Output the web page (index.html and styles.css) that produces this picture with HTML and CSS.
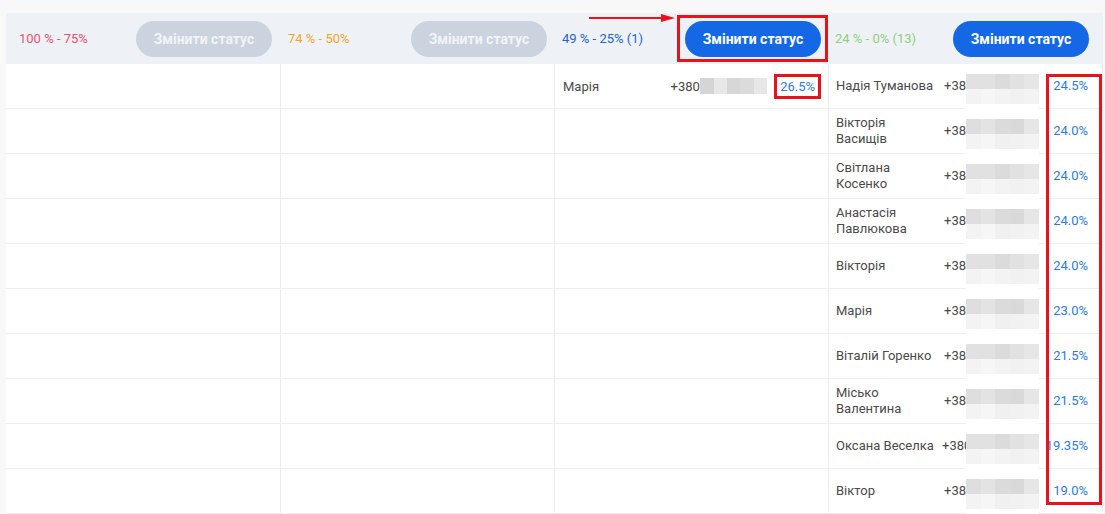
FILE: index.html
```html
<!DOCTYPE html>
<html lang="uk">
<head>
<meta charset="UTF-8">
<meta name="viewport" content="width=device-width, initial-scale=1.0">
<title>Статуси</title>
<link rel="stylesheet" href="styles.css">
</head>
<body>

<div class="board">
    <div class="head">
        <div class="head-cell">
            <span class="range red">100 % - 75%</span>
            <button class="status-btn off">Змінити статус</button>
        </div>
        <div class="head-cell">
            <span class="range orange">74 % - 50%</span>
            <button class="status-btn off">Змінити статус</button>
        </div>
        <div class="head-cell">
            <span class="range blue">49 % - 25% (1)</span>
            <button class="status-btn">Змінити статус</button>
        </div>
        <div class="head-cell last">
            <span class="range green">24 % - 0% (13)</span>
            <button class="status-btn">Змінити статус</button>
        </div>
    </div>

    <div class="grid">
        <!-- рядок 1 -->
        <div class="cell"></div>
        <div class="cell"></div>
        <div class="cell mid">
            <span class="name">Марія</span>
            <span class="phone">+380</span>
            <span class="blur-line"><i></i><i></i><i></i><i></i><i></i></span>
            <span class="pct marked">26.5%</span>
        </div>
        <div class="cell person">
            <span class="name">Надія Туманова</span>
            <span class="phone">+38</span>
            <span class="blur"><i></i><i></i><i></i><i></i><i></i><i></i><i></i><i></i><i></i><i></i></span>
            <span class="pct">24.5%</span>
        </div>
        <!-- рядок 2 -->
        <div class="cell"></div>
        <div class="cell"></div>
        <div class="cell"></div>
        <div class="cell person">
            <span class="name">Вікторія Васищів</span>
            <span class="phone">+38</span>
            <span class="blur alt"><i></i><i></i><i></i><i></i><i></i><i></i><i></i><i></i><i></i><i></i></span>
            <span class="pct">24.0%</span>
        </div>
        <!-- рядок 3 -->
        <div class="cell"></div>
        <div class="cell"></div>
        <div class="cell"></div>
        <div class="cell person">
            <span class="name">Світлана Косенко</span>
            <span class="phone">+38</span>
            <span class="blur"><i></i><i></i><i></i><i></i><i></i><i></i><i></i><i></i><i></i><i></i></span>
            <span class="pct">24.0%</span>
        </div>
        <!-- рядок 4 -->
        <div class="cell"></div>
        <div class="cell"></div>
        <div class="cell"></div>
        <div class="cell person">
            <span class="name">Анастасія Павлюкова</span>
            <span class="phone">+38</span>
            <span class="blur alt"><i></i><i></i><i></i><i></i><i></i><i></i><i></i><i></i><i></i><i></i></span>
            <span class="pct">24.0%</span>
        </div>
        <!-- рядок 5 -->
        <div class="cell"></div>
        <div class="cell"></div>
        <div class="cell"></div>
        <div class="cell person">
            <span class="name">Вікторія</span>
            <span class="phone">+38</span>
            <span class="blur"><i></i><i></i><i></i><i></i><i></i><i></i><i></i><i></i><i></i><i></i></span>
            <span class="pct">24.0%</span>
        </div>
        <!-- рядок 6 -->
        <div class="cell"></div>
        <div class="cell"></div>
        <div class="cell"></div>
        <div class="cell person">
            <span class="name">Марія</span>
            <span class="phone">+38</span>
            <span class="blur alt"><i></i><i></i><i></i><i></i><i></i><i></i><i></i><i></i><i></i><i></i></span>
            <span class="pct">23.0%</span>
        </div>
        <!-- рядок 7 -->
        <div class="cell"></div>
        <div class="cell"></div>
        <div class="cell"></div>
        <div class="cell person">
            <span class="name">Віталій Горенко</span>
            <span class="phone">+38</span>
            <span class="blur"><i></i><i></i><i></i><i></i><i></i><i></i><i></i><i></i><i></i><i></i></span>
            <span class="pct">21.5%</span>
        </div>
        <!-- рядок 8 -->
        <div class="cell"></div>
        <div class="cell"></div>
        <div class="cell"></div>
        <div class="cell person">
            <span class="name">Місько Валентина</span>
            <span class="phone">+38</span>
            <span class="blur alt"><i></i><i></i><i></i><i></i><i></i><i></i><i></i><i></i><i></i><i></i></span>
            <span class="pct">21.5%</span>
        </div>
        <!-- рядок 9 -->
        <div class="cell"></div>
        <div class="cell"></div>
        <div class="cell"></div>
        <div class="cell person">
            <span class="name">Оксана Веселка</span>
            <span class="phone">+380</span>
            <span class="blur"><i></i><i></i><i></i><i></i><i></i><i></i><i></i><i></i><i></i><i></i></span>
            <span class="pct">19.35%</span>
        </div>
        <!-- рядок 10 -->
        <div class="cell"></div>
        <div class="cell"></div>
        <div class="cell"></div>
        <div class="cell person">
            <span class="name">Віктор</span>
            <span class="phone">+38</span>
            <span class="blur alt"><i></i><i></i><i></i><i></i><i></i><i></i><i></i><i></i><i></i><i></i></span>
            <span class="pct">19.0%</span>
        </div>
    </div>

    <!-- позначки на скріншоті -->
    <svg class="note-arrow" width="86" height="10" viewBox="0 0 86 10">
        <line x1="0" y1="5" x2="74" y2="5" stroke="#e8121c" stroke-width="2"/>
        <polygon points="72,1 86,5 72,9" fill="#e8121c"/>
    </svg>
    <div class="note-box btn-box"></div>
    <div class="note-box pct-box"></div>
</div>

</body>
</html>
```

FILE: styles.css
```css
body {
    margin: 0;
    padding: 0;
    background-color: #f8f8f9;
    font-family: Roboto, "Noto Sans", Arial, sans-serif;
    font-size: 13px;
    color: #4a4a4a;
}
.board {
    position: relative;
    width: 1097px;
    margin: 13px 0 0 6px;
    background-color: #ffffff;
}
.head {
    display: grid;
    grid-template-columns: 275px 274px 274px 274px;
    height: 51px;
    background-color: #eef2f6;
}
.head-cell {
    display: flex;
    align-items: center;
    justify-content: space-between;
    padding: 0 8px 0 7px;
}
.head-cell:first-child {
    padding-left: 13px;
    padding-right: 9px;
}
.head-cell.last {
    padding-left: 6px;
    padding-right: 14px;
}
.range {
    font-size: 13px;
}
.red { color: #f1506b; }
.orange { color: #f8a523; }
.blue { color: #2263d8; }
.green { color: #8fcf7e; }

.status-btn {
    width: 136px;
    height: 36px;
    border: none;
    border-radius: 18px;
    background-color: #1468e6;
    color: #ffffff;
    font-family: Roboto, "Noto Sans", Arial, sans-serif;
    font-size: 14px;
    font-weight: bold;
    cursor: pointer;
}
.status-btn.off {
    background-color: #cbd3df;
    color: #f1f4f8;
}

.grid {
    display: grid;
    grid-template-columns: 275px 274px 274px 274px;
    grid-auto-rows: 45px;
}
.cell {
    border-right: 1px solid #e9edf3;
    border-bottom: 1px solid #eef0f3;
    box-sizing: border-box;
}
.cell.mid {
    display: flex;
    align-items: center;
    padding: 0 7px 0 8px;
}
.cell.mid .name {
    width: 108px;
}
.cell.mid .phone {
    width: 30px;
}
.blur-line {
    display: flex;
    width: 67px;
    height: 16px;
    margin-right: 7px;
}
.blur-line i {
    flex: 1;
    background-color: #d5d5d5;
}
.blur-line i:nth-child(2) { background-color: #e8e8e8; }
.blur-line i:nth-child(3) { background-color: #d7d7d7; }
.blur-line i:nth-child(4) { background-color: #dbdbdb; }
.blur-line i:nth-child(5) { background-color: #e7e7e7; }

.pct {
    color: #2b7be6;
    margin-left: auto;
}
.pct.marked {
    border: 3px solid #e8121c;
    padding: 2px 3px;
}

.cell.person {
    display: flex;
    align-items: center;
    padding: 0 14px 0 7px;
    line-height: 16px;
}
.person .name {
    width: 99px;
    flex-shrink: 0;
}
.person .phone {
    flex: 1;
    min-width: 0;
    padding-left: 7px;
    text-align: right;
    white-space: nowrap;
}
.person .pct {
    width: 49px;
    flex-shrink: 0;
    text-align: right;
}

/* закрите поле телефону */
.blur {
    align-self: flex-start;
    flex-shrink: 0;
    display: grid;
    grid-template-columns: repeat(5, 1fr);
    grid-template-rows: 15px 15px;
    width: 73px;
    height: 45px;
    padding-top: 10px;
    box-sizing: border-box;
    background-color: #ffffff;
    position: relative;
}
.blur i { background-color: #e1e1e1; }
.blur i:nth-child(3) { background-color: #dbdbdb; }
.blur i:nth-child(5) { background-color: #e6e6e6; }
.blur i:nth-child(n+6) { background-color: #f3f3f3; }
.blur i:nth-child(7) { background-color: #f6f6f6; }
.blur i:nth-child(9) { background-color: #f1f1f1; }
.blur.alt i:nth-child(1) { background-color: #dedede; }
.blur.alt i:nth-child(2) { background-color: #e3e3e3; }
.blur.alt i:nth-child(4) { background-color: #d9d9d9; }
.blur.alt i:nth-child(8) { background-color: #f0f0f0; }

.note-arrow {
    position: absolute;
    left: 583px;
    top: 0;
}
.note-box {
    position: absolute;
    border: 3px solid #e8121c;
    box-sizing: border-box;
}
.btn-box {
    left: 671px;
    top: 2px;
    width: 151px;
    height: 47px;
}
.pct-box {
    left: 1040px;
    top: 61px;
    width: 56px;
    height: 431px;
}
```
